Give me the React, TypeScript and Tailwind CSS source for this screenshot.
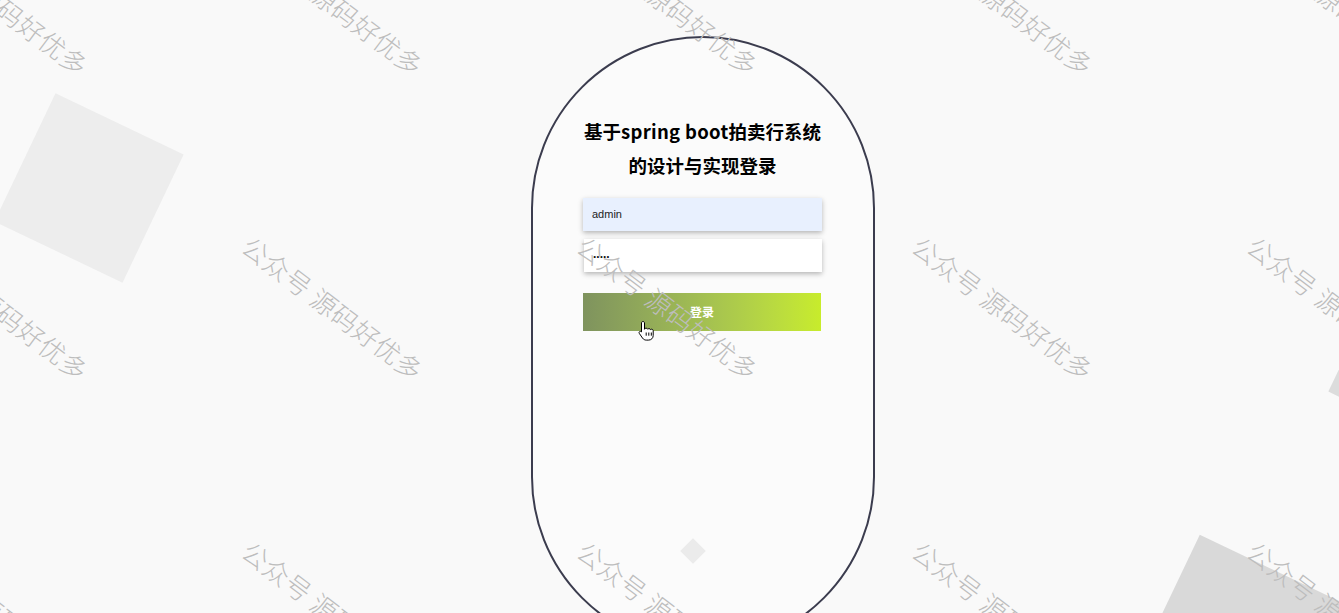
import React from "react";

const marks = [
  { x: -2, y: 3 },
  { x: 333, y: 3 },
  { x: 668, y: 3 },
  { x: 1003, y: 3 },
  { x: 1338, y: 3 },
  { x: -2, y: 308 },
  { x: 333, y: 308 },
  { x: 668, y: 308 },
  { x: 1003, y: 308 },
  { x: 1338, y: 308 },
  { x: -2, y: 613 },
  { x: 333, y: 613 },
  { x: 668, y: 613 },
  { x: 1003, y: 613 },
  { x: 1338, y: 613 },
];

function Watermarks() {
  return (
    <div className="pointer-events-none absolute inset-0 z-20 overflow-hidden">
      {marks.map((m, i) => (
        <div
          key={i}
          className="absolute w-0 h-0"
          style={{ left: m.x, top: m.y }}
        >
          <span className="absolute left-0 top-0 -translate-x-1/2 -translate-y-1/2 rotate-[37deg] whitespace-nowrap text-[26px] leading-[26px] tracking-[0.5px] text-[#bdbdbd] font-['Noto_Sans_CJK_SC',sans-serif] font-light">
            公众号 源码好优多
          </span>
        </div>
      ))}
    </div>
  );
}

function Shapes() {
  return (
    <div className="pointer-events-none absolute inset-0 z-0 overflow-hidden">
      <div className="absolute left-[18px] top-[117px] w-[142px] h-[142px] rotate-[25.5deg] bg-[#ededed]" />
      <div className="absolute left-[684px] top-[542px] w-[18px] h-[18px] rotate-45 bg-[#e2e2e2]" />
      <div className="absolute left-[1147px] top-[568px] w-[200px] h-[200px] rotate-[25.5deg] bg-[#d9d9d9]" />
      <div className="absolute left-[1345px] top-[318px] w-[100px] h-[100px] rotate-[25.5deg] bg-[#dcdcdc]" />
    </div>
  );
}

function HandCursor() {
  return (
    <svg
      className="absolute left-[638px] top-[320px] z-10"
      width="17"
      height="21"
      viewBox="0 0 17 21"
    >
      <path
        d="M5 1.5c.8 0 1.5.7 1.5 1.5v6.2l.1-.1c.3-.6 1-.9 1.6-.9.7 0 1.3.4 1.5 1 .3-.4.8-.6 1.3-.6.7 0 1.3.4 1.5 1 .3-.3.7-.4 1.1-.4.9 0 1.6.7 1.6 1.6v4.7c0 2.6-2 4.6-4.6 4.6H8.3c-1.5 0-2.8-.7-3.7-1.9L1.3 13.4c-.4-.6-.3-1.4.3-1.8.6-.4 1.300-.3 1.8.2l.1.1V3c0-.8.7-1.5 1.5-1.5z"
        fill="#fff"
        stroke="#000"
        strokeWidth="1"
      />
      <path d="M8.2 12.5v3.2M10.8 12.5v3.2M13.3 12.5v3.2" stroke="#000" strokeWidth="1" />
    </svg>
  );
}

export default function App() {
  return (
    <div className="relative w-[1339px] h-[613px] overflow-hidden bg-[#f9f9f9] font-['Noto_Sans_CJK_SC',sans-serif]">
      <Shapes />
      <div className="relative z-10 flex justify-center pl-[66px] pt-[36px]">
        <div className="relative w-[344px] h-[613px] shrink-0 rounded-full border-2 border-[#3b3c4e] bg-white/30 flex flex-col items-center">
          <h1 className="mt-[76px] text-center text-[18.5px] leading-[34px] font-bold text-black whitespace-nowrap">
            基于<span className="tracking-[0.3px]">spring boot</span>拍卖行系统
            <br />
            的设计与实现登录
          </h1>
          <div className="mt-[16px] flex flex-col w-[239px]">
            <div className="h-[33px] bg-[#e8f0fe] shadow-[0_2px_5px_rgba(0,0,0,0.28)] flex items-center px-[9px] text-[11px] text-[#222] font-['Liberation_Sans',sans-serif]">
              admin
            </div>
            <div className="mt-[8px] ml-[1px] h-[33px] bg-white shadow-[0_2px_5px_rgba(0,0,0,0.28)] flex items-center px-[9px] pb-[3px] text-[12px] leading-none text-[#111] font-bold font-['Liberation_Sans',sans-serif]">
              <span>.....</span>
            </div>
            <button className="mt-[21px] h-[38px] w-[238px] bg-gradient-to-r from-[#7f935e] to-[#c8ec2b] text-white text-[12px] font-bold flex items-center justify-center">
              登录
            </button>
          </div>
        </div>
      </div>
      <HandCursor />
      <Watermarks />
    </div>
  );
}
